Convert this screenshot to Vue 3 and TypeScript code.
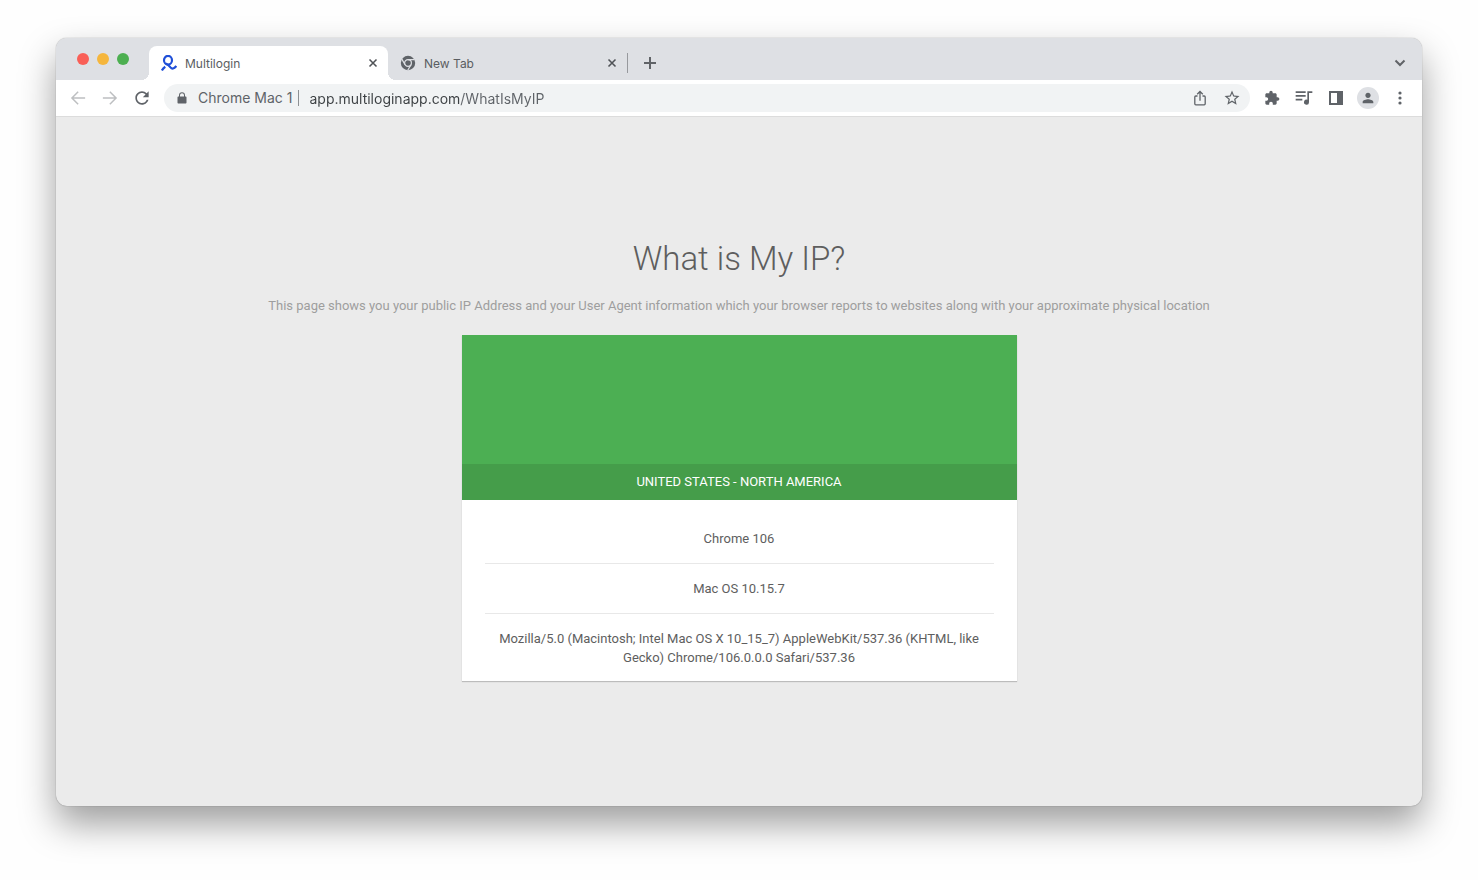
<script setup lang="ts">
import { ref } from 'vue'

interface Tab {
  id: number
  title: string
  icon: 'multilogin' | 'chrome'
}

const tabs: Tab[] = [
  { id: 1, title: 'Multilogin', icon: 'multilogin' },
  { id: 2, title: 'New Tab', icon: 'chrome' },
]
const activeTab = ref(1)
const address = ref('app.multiloginapp.com/WhatIsMyIP')

const details: string[] = [
  'Chrome 106',
  'Mac OS 10.15.7',
  'Mozilla/5.0 (Macintosh; Intel Mac OS X 10_15_7) AppleWebKit/537.36 (KHTML, like Gecko) Chrome/106.0.0.0 Safari/537.36',
]
</script>

<template>
  <div class="desktop">
    <div class="window">
      <header class="tabstrip">
        <div class="lights">
          <button class="light red" aria-label="Close window"></button>
          <button class="light yellow" aria-label="Minimize window"></button>
          <button class="light green" aria-label="Zoom window"></button>
        </div>
        <div
          v-for="tab in tabs"
          :key="tab.id"
          class="tab"
          :class="{ active: tab.id === activeTab }"
        >
          <button class="tab-main" @click="activeTab = tab.id">
            <svg v-if="tab.icon === 'multilogin'" class="favicon" viewBox="0 0 16 16" fill="none" stroke="#1f4fd8" stroke-width="2.2">
              <ellipse cx="7" cy="5.200" rx="4" ry="4.300" />
              <path d="M4.600 8.400c2 .8 3.700 2.200 4.900 3.900 1.500 2 3.400 1.700 5.800-1.300" />
              <path d="M4.300 11.700C3 12.500 1.800 13.700.9 15.400" />
            </svg>
            <svg v-else class="favicon" viewBox="0 0 16 16">
              <circle cx="8" cy="8" r="7.200" fill="#5f6368" />
              <circle cx="8" cy="8" r="3.400" fill="none" stroke="#dee0e4" stroke-width="1.200" />
              <path d="M8 4.600h6.400M5.060 9.700 1.860 4.160M10.940 9.700 7.740 15.240" stroke="#dee0e4" stroke-width="1.200" />
            </svg>
            <span>{{ tab.title }}</span>
          </button>
          <button class="tab-close" :aria-label="`Close ${tab.title}`">
            <svg viewBox="0 0 16 16" fill="none" stroke="#505357" stroke-width="1.800">
              <path d="m4 4 8 8m0-8-8 8" />
            </svg>
          </button>
        </div>
        <span class="tab-divider"></span>
        <button class="new-tab" aria-label="New tab">
          <svg viewBox="0 0 16 16" fill="none" stroke="#606367" stroke-width="2"><path d="M8 2v12M2 8h12" /></svg>
        </button>
        <button class="tab-search" aria-label="Search tabs">
          <svg viewBox="0 0 16 16" fill="none" stroke="#606367" stroke-width="2"><path d="m3.500 5.500 4.500 4.500 4.500-4.500" /></svg>
        </button>
      </header>

      <nav class="toolbar" aria-label="Browser toolbar">
        <button class="tool dim" aria-label="Back">
          <svg class="medium" viewBox="0 0 24 24"><path d="M21.500 11H6.300l6.600-6.600L11.500 3l-9 9 9 9 1.400-1.400L6.300 13h15.200z" /></svg>
        </button>
        <button class="tool dim" aria-label="Forward">
          <svg class="medium" viewBox="0 0 24 24"><path d="M2.500 11h15.200l-6.600-6.600L12.500 3l9 9-9 9-1.400-1.400 6.600-6.600H2.500z" /></svg>
        </button>
        <button class="tool" aria-label="Reload">
          <svg class="large" viewBox="0 0 24 24"><path d="M17.650 6.350C16.200 4.900 14.210 4 12 4c-4.420 0-7.990 3.580-7.990 8s3.570 8 7.990 8c3.730 0 6.840-2.550 7.730-6h-2.080c-.82 2.330-3.040 4-5.650 4-3.310 0-6-2.690-6-6s2.690-6 6-6c1.660 0 3.140.69 4.220 1.780L13 11h7V4z" /></svg>
        </button>

        <div class="omnibox">
          <button class="tool" aria-label="Site information">
            <svg class="small" viewBox="0 0 12 12"><path fill-rule="evenodd" d="M2.500 4.500H3V3.200a3 3 0 0 1 6 0v1.300h.5c.6 0 1 .4 1 1v5c0 .6-.4 1-1 1h-7c-.6 0-1-.4-1-1v-5c0-.6.4-1 1-1Zm1.500 0h4V3.200a2 2 0 0 0-4 0Z" /></svg>
          </button>
          <span class="profile">Chrome Mac 1</span>
          <input v-model="address" class="address" type="text" aria-label="Address" spellcheck="false" />
          <button class="tool" aria-label="Share">
            <svg viewBox="0 0 16 16" fill="none" stroke="#5f6368" stroke-width="1.300"><path d="M5.500 6H3.800a1 1 0 0 0-1 1v6.800a1 1 0 0 0 1 1h8.400a1 1 0 0 0 1-1V7a1 1 0 0 0-1-1h-1.700M8 10.800V2M5.200 4.300 8 1.500l2.800 2.800" /></svg>
          </button>
          <button class="tool" aria-label="Bookmark this tab">
            <svg class="medium" viewBox="0 0 24 24"><path d="m22 9.240-7.190-.62L12 2 9.190 8.630 2 9.240l5.460 4.730L5.820 21 12 17.270 18.180 21l-1.630-7.030zM12 15.400l-3.760 2.270 1-4.280-3.320-2.880 4.380-.38L12 6.100l1.710 4.040 4.380.38-3.320 2.880 1 4.280z" /></svg>
          </button>
        </div>

        <button class="tool" aria-label="Extensions">
          <svg viewBox="0 0 24 24"><path d="M20.500 11H19V7c0-1.100-.9-2-2-2h-4V3.500C13 2.120 11.880 1 10.500 1S8 2.120 8 3.500V5H4c-1.100 0-1.990.9-1.990 2v3.800H3.500c1.490 0 2.700 1.210 2.700 2.700s-1.210 2.700-2.700 2.700H2V20c0 1.100.9 2 2 2h3.800v-1.500c0-1.490 1.210-2.700 2.700-2.700s2.700 1.210 2.700 2.700V22H17c1.100 0 2-.9 2-2v-4h1.500c1.380 0 2.500-1.120 2.500-2.500S21.880 11 20.500 11z" /></svg>
        </button>
        <button class="tool" aria-label="Media controls">
          <svg class="large" viewBox="0 0 24 24"><path d="M14 4H2v2h12zm0 4.500H2v2h12zM2 15h8v-2H2zM16 4v10.180a3 3 0 1 0 2 2.820V6h4V4z" /></svg>
        </button>
        <button class="tool" aria-label="Side panel">
          <svg viewBox="0 0 16 16"><path fill-rule="evenodd" d="M1 1h14v14H1Zm2 2v10h6V3Z" /></svg>
        </button>
        <button class="tool" aria-label="Profile">
          <span class="avatar">
            <svg viewBox="0 0 24 24"><path d="M12 12c2.210 0 4-1.790 4-4s-1.790-4-4-4-4 1.790-4 4 1.790 4 4 4zm0 2c-2.670 0-8 1.340-8 4v2h16v-2c0-2.660-5.330-4-8-4z" /></svg>
          </span>
        </button>
        <button class="tool" aria-label="Menu">
          <svg viewBox="0 0 16 16"><circle cx="8" cy="3" r="1.600" /><circle cx="8" cy="8" r="1.600" /><circle cx="8" cy="13" r="1.600" /></svg>
        </button>
      </nav>

      <main class="page">
        <h1>What is My IP?</h1>
        <p class="intro">
          This page shows you your public IP Address and your User Agent information which your browser
          reports to websites along with your approximate physical location
        </p>
        <section class="card">
          <div class="map"></div>
          <h2 class="location">UNITED STATES - NORTH AMERICA</h2>
          <ul class="details">
            <li v-for="item in details" :key="item">{{ item }}</li>
          </ul>
        </section>
      </main>
    </div>
  </div>
</template>

<style>
body {
  margin: 0;
  background: #fefefe;
}
</style>

<style scoped>
* {
  box-sizing: border-box;
}

button {
  margin: 0;
  padding: 0;
  border: 0;
  background: none;
  font: inherit;
  color: inherit;
}

svg {
  display: block;
  width: 16px;
  height: 16px;
  fill: #5f6368;
}

svg[fill='none'] {
  fill: none;
}

.desktop {
  display: flex;
  min-height: 100vh;
  padding: 38px 56px 74px;
  overflow: hidden;
  font-family: Roboto, 'Liberation Sans', sans-serif;
}

.window {
  display: flex;
  flex: 1;
  flex-direction: column;
  min-width: 0;
  border-radius: 11px;
  background: #ebebeb;
  box-shadow:
    0 0 1px rgba(0, 0, 0, 0.5),
    0 18px 36px rgba(0, 0, 0, 0.38);
}

.tabstrip {
  display: flex;
  align-items: stretch;
  height: 42px;
  padding: 8px 6px 0 21px;
  border-radius: 11px 11px 0 0;
  background: #dee0e4;
  color: #5a5d61;
  font-family: Inter, Roboto, sans-serif;
  font-size: 12px;
}

.lights {
  display: flex;
  gap: 8px;
  width: 72px;
  padding-top: 7px;
}

.light {
  width: 12px;
  height: 12px;
  border-radius: 50%;
}

.red {
  background: #f95f57;
}

.yellow {
  background: #f5b63d;
}

.green {
  background: #4caf50;
}

.tab {
  position: relative;
  display: flex;
  flex: 0 1 239px;
  align-items: center;
  padding: 0 8px 0 12px;
  border-radius: 8px 8px 0 0;
}

.tab.active {
  background: #fff;
}

.tab.active::before,
.tab.active::after {
  content: '';
  position: absolute;
  bottom: 0;
  width: 8px;
  height: 8px;
}

.tab.active::before {
  right: 100%;
  background: radial-gradient(circle at 0 0, transparent 8px, #fff 8px);
}

.tab.active::after {
  left: 100%;
  background: radial-gradient(circle at 100% 0, transparent 8px, #fff 8px);
}

.tab-main {
  display: flex;
  flex: 1;
  gap: 8px;
  align-items: center;
  min-width: 0;
}

.tab-close svg {
  width: 14px;
  height: 14px;
}

.tab-divider {
  align-self: center;
  width: 1px;
  height: 20px;
  background: #97999d;
}

.new-tab {
  display: grid;
  place-items: center;
  width: 44px;
}

.tab-search {
  display: grid;
  place-items: center;
  width: 32px;
  margin-left: auto;
}

.toolbar {
  display: flex;
  align-items: center;
  height: 37px;
  padding: 0 6px;
  border-bottom: 1px solid #dcdcdc;
  background: #fff;
}

.tool {
  display: grid;
  flex: none;
  place-items: center;
  width: 32px;
  height: 28px;
}

.dim svg {
  fill: #bdbfc1;
}

svg.small {
  width: 12px;
  height: 12px;
}

svg.medium {
  width: 18px;
  height: 18px;
}

svg.large {
  width: 20px;
  height: 20px;
}

.omnibox {
  display: flex;
  flex: 1;
  align-items: center;
  min-width: 0;
  height: 28px;
  margin: 0 6px;
  padding: 0 2px;
  border-radius: 14px;
  background: #f1f3f4;
  color: #5f6368;
  font-family: Inter, Roboto, sans-serif;
  font-size: 14px;
}

.profile {
  padding-right: 6px;
  border-right: 1px solid #8d9093;
  line-height: 16px;
  white-space: nowrap;
}

/* The host is darker than the path that follows it. */
.address {
  flex: 1;
  min-width: 0;
  padding: 0 0 0 10px;
  border: 0;
  outline: 0;
  background: linear-gradient(90deg, #3c4043 161px, #5f6368 161px);
  background-clip: text;
  color: transparent;
  font: inherit;
}

.avatar {
  display: grid;
  place-items: center;
  width: 22px;
  height: 22px;
  border-radius: 50%;
  background: #dee0e4;
}

.page {
  display: flex;
  flex: 1;
  flex-direction: column;
  align-items: center;
  justify-content: center;
  padding: 24px 24px 26px;
  color: #5e5e5e;
  font-size: 13px;
  line-height: 19px;
  text-align: center;
}

h1 {
  margin: 0 0 18px;
  font-size: 33px;
  font-weight: 300;
  line-height: 38px;
}

.intro {
  margin: 0 0 20px;
  color: #9e9e9e;
}

.card {
  width: 100%;
  max-width: 555px;
  background: #fff;
  box-shadow: 0 1px 1px rgba(0, 0, 0, 0.2);
}

.map {
  height: 129px;
  background: #4caf53;
}

.location {
  margin: 0;
  background: #459d4a;
  color: #fff;
  font-size: 13px;
  font-weight: 400;
  line-height: 36px;
}

.details {
  margin: 0;
  padding: 14px 23px 0;
  list-style: none;
}

.details li {
  padding: 15px 8px;
}

.details li + li {
  border-top: 1px solid #e8e8e8;
}

.details li:last-child {
  padding-bottom: 14px;
}
</style>
